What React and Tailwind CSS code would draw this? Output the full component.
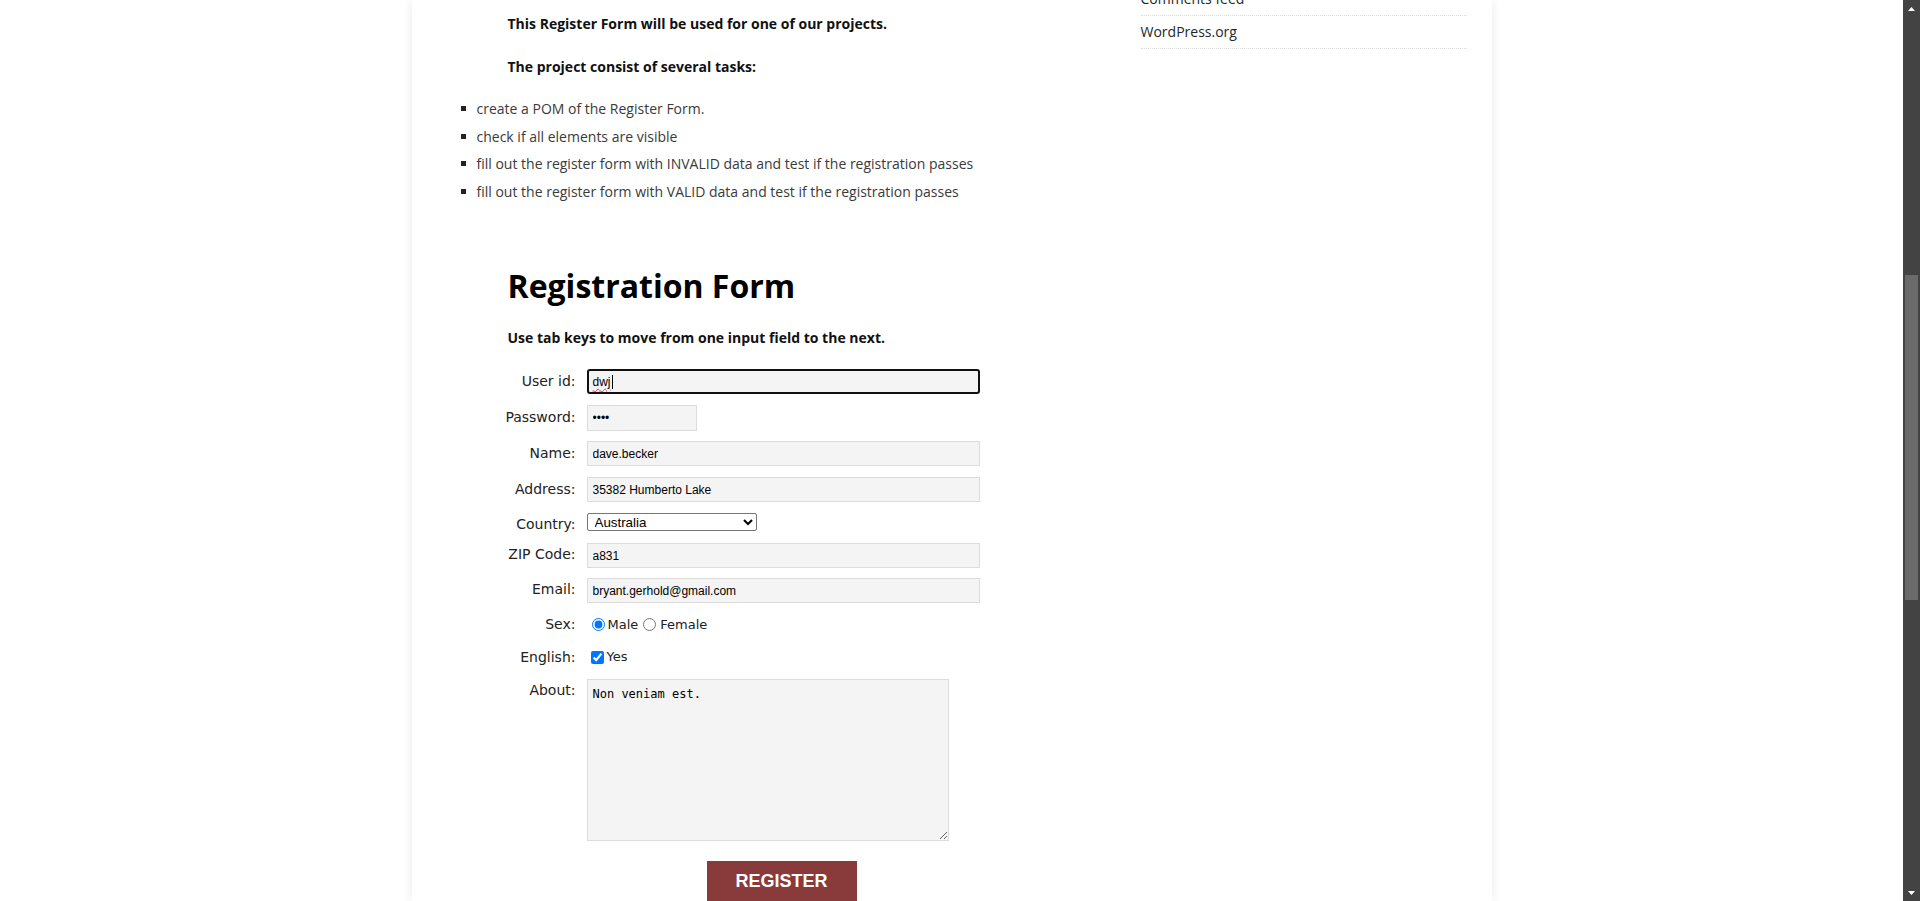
export default function App() {
  const items = [
    "create a POM of the Register Form.",
    "check if all elements are visible",
    "fill out the register form with INVALID data and test if the registration passes",
    "fill out the register form with VALID data and test if the registration passes",
  ];
  const lbl =
    "w-[81px] shrink-0 flex items-center justify-end font-['DejaVu_Sans',sans-serif] text-[14px] text-[#222]";
  const inp =
    "h-[25px] border border-[#dcdcdc] bg-[#f4f4f4] px-[5px] text-[12px] font-['Liberation_Sans',Arial,sans-serif] text-black outline-none";
  return (
    <div className="flex w-[1920px] h-[901px] overflow-hidden bg-white">
      <div className="flex-1 h-full overflow-hidden">
        <div className="mx-auto flex w-[1080px] h-full bg-white shadow-[0_0_10px_rgba(0,0,0,0.09)] font-['Open_Sans',sans-serif]">
          <main className="w-[729px] shrink-0 pl-[50px]">
            <p className="mt-[14px] pl-[46px] text-[14px] leading-[20px] font-bold text-[#111]">
              This Register Form will be used for one of our projects.
            </p>
            <p className="mt-[23px] pl-[46px] text-[14px] leading-[20px] font-bold text-[#111]">
              The project consist of several tasks:
            </p>
            <ul className="mt-[18px] -ml-px">
              {items.map((t) => (
                <li key={t} className="flex items-center h-[27.5px] text-[14px] text-[#3a3a3a]">
                  <span className="w-[5px] h-[5px] bg-[#222] mr-[11px] shrink-0" />
                  {t}
                </li>
              ))}
            </ul>
            <h2 className="mt-[61px] pl-[46px] text-[32px] leading-[40px] font-bold text-black">
              Registration Form
            </h2>
            <p className="mt-[22px] pl-[46px] text-[14px] leading-[20px] font-bold text-[#111]">
              Use tab keys to move from one input field to the next.
            </p>
            <div className="mt-[21px] ml-[33px] flex flex-col">
              <div className="flex h-[36px] gap-[11px]">
                <div className={lbl + " h-[25px]"}>User id:</div>
                <div className="w-[393px] h-[25px] border-2 border-[#111] rounded-[3px] bg-[#f4f4f4] flex items-center pl-[4px] text-[12px] font-['Liberation_Sans',Arial,sans-serif] text-black">
                  <span className="underline decoration-wavy decoration-red-500 decoration-1 underline-offset-2">dwj</span>
                  <span className="w-px h-[14px] bg-black ml-px" />
                </div>
              </div>
              <div className="flex h-[36px] gap-[11px]">
                <div className={lbl + " h-[24px]"}>Password:</div>
                <input type="password" defaultValue="abcd" className={inp + " w-[110px] h-[26px]"} />
              </div>
              <div className="flex h-[36px] gap-[11px]">
                <div className={lbl + " h-[24px]"}>Name:</div>
                <input defaultValue="dave.becker" className={inp + " w-[393px]"} />
              </div>
              <div className="flex h-[36px] gap-[11px]">
                <div className={lbl + " h-[24px]"}>Address:</div>
                <input defaultValue="35382 Humberto Lake" className={inp + " w-[393px]"} />
              </div>
              <div className="flex h-[30px] gap-[11px]">
                <div className={lbl + " h-[22px]"}>Country:</div>
                <select
                  defaultValue="Australia"
                  className="w-[170px] h-[18px] border border-[#767676] rounded-[2px] bg-white pl-[3px] text-[13.33px] leading-[16px] font-['Liberation_Sans',Arial,sans-serif] text-black"
                >
                  <option>Australia</option>
                  <option>Austria</option>
                </select>
              </div>
              <div className="flex h-[35px] gap-[11px]">
                <div className={lbl + " h-[22px]"}>ZIP Code:</div>
                <input defaultValue="a831" className={inp + " w-[393px]"} />
              </div>
              <div className="flex h-[35px] gap-[11px]">
                <div className={lbl + " h-[23px]"}>Email:</div>
                <input defaultValue="bryant.gerhold@gmail.com" className={inp + " w-[393px]"} />
              </div>
              <div className="flex h-[33px] gap-[11px]">
                <div className={lbl + " h-[23px]"}>Sex:</div>
                <div className="flex items-center h-[23px] font-['DejaVu_Sans',sans-serif] text-[13px] text-[#222]">
                  <input type="radio" name="sex" defaultChecked className="w-[13px] h-[13px] m-0 ml-[5px] mr-[3px]" />
                  Male
                  <input type="radio" name="sex" className="w-[13px] h-[13px] m-0 ml-[5px] mr-[4px]" />
                  Female
                </div>
              </div>
              <div className="flex h-[33px] gap-[11px]">
                <div className={lbl + " h-[22px]"}>English:</div>
                <div className="flex items-center h-[22px] font-['DejaVu_Sans',sans-serif] text-[13px] text-[#222]">
                  <input type="checkbox" defaultChecked className="w-[13px] h-[13px] m-0 ml-[4px] mr-[3px]" />
                  Yes
                </div>
              </div>
              <div className="flex h-[162px] gap-[11px]">
                <div className={lbl + " h-[22px]"}>About:</div>
                <textarea
                  defaultValue="Non veniam est."
                  className="w-[362px] h-[162px] border border-[#dcdcdc] bg-[#f4f4f4] pt-[7px] px-[5px] font-['DejaVu_Sans_Mono',monospace] text-[12px] leading-[15px] text-black outline-none resize-y"
                />
              </div>
              <button className="mt-[20px] ml-[212px] w-[150px] h-[40px] shrink-0 bg-[#893a3a] text-white font-bold text-[18px] font-['Liberation_Sans',Arial,sans-serif]">
                REGISTER
              </button>
            </div>
          </main>
          <aside className="w-[326px] shrink-0">
            <ul className="-mt-[17px] text-[14px] text-[#23282d]">
              <li className="h-[33px] flex items-center pb-[2px] border-b border-dotted border-[#dcdcdc]">Comments feed</li>
              <li className="h-[33px] flex items-center pb-[2px] border-b border-dotted border-[#dcdcdc]">WordPress.org</li>
            </ul>
          </aside>
        </div>
      </div>
      <div className="w-[17px] h-full shrink-0 bg-[#434343] flex flex-col">
        <div className="h-[17px] flex items-center justify-center">
          <svg width="7" height="4" viewBox="0 0 7 4">
            <path d="M0 4 L3.5 0 L7 4 Z" fill="#fff" />
          </svg>
        </div>
        <div className="flex-1">
          <div className="mt-[258px] mx-[2px] h-[325px] bg-[#6b6b6b]" />
        </div>
        <div className="h-[17px] flex items-center justify-center">
          <svg width="7" height="4" viewBox="0 0 7 4">
            <path d="M0 0 L3.5 4 L7 0 Z" fill="#fff" />
          </svg>
        </div>
      </div>
    </div>
  );
}
